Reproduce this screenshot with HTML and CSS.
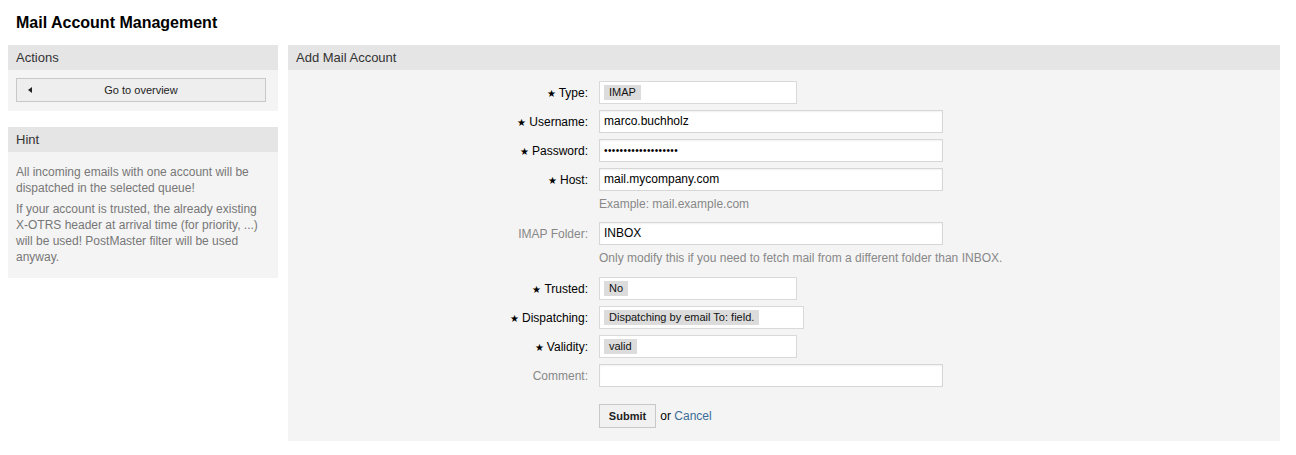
FILE: index.html
```html
<!DOCTYPE html>
<html>
<head>
<meta charset="utf-8">
<link rel="stylesheet" href="styles.css">
</head>
<body>
<h1 class="title">Mail Account Management</h1>
<div class="layout">
  <aside class="sidebar">
    <section class="box">
      <h2 class="box-head">Actions</h2>
      <div class="box-body actions">
        <button class="btn-overview"><span class="tri"></span>Go to overview</button>
      </div>
    </section>
    <section class="box hint">
      <h2 class="box-head">Hint</h2>
      <div class="box-body hint-body">
        <p>All incoming emails with one account will be dispatched in the selected queue!</p>
        <p>If your account is trusted, the already existing X-OTRS header at arrival time (for priority, ...) will be used! PostMaster filter will be used anyway.</p>
      </div>
    </section>
  </aside>
  <main class="main box">
    <h2 class="box-head">Add Mail Account</h2>
    <div class="box-body form">
      <div class="row">
        <label class="lbl req"><span class="star">★</span> Type:</label>
        <div class="select w198"><span class="opt">IMAP</span></div>
      </div>
      <div class="row">
        <label class="lbl req"><span class="star">★</span> Username:</label>
        <div class="input">marco.buchholz</div>
      </div>
      <div class="row">
        <label class="lbl req"><span class="star">★</span> Password:</label>
        <div class="input pw">•••••••••••••••••••</div>
      </div>
      <div class="row">
        <label class="lbl req"><span class="star">★</span> Host:</label>
        <div class="input">mail.mycompany.com</div>
      </div>
      <div class="help">Example: mail.example.com</div>
      <div class="row">
        <label class="lbl opt-lbl">IMAP Folder:</label>
        <div class="input">INBOX</div>
      </div>
      <div class="help help2">Only modify this if you need to fetch mail from a different folder than INBOX.</div>
      <div class="row">
        <label class="lbl req"><span class="star">★</span> Trusted:</label>
        <div class="select w198"><span class="opt">No</span></div>
      </div>
      <div class="row">
        <label class="lbl req"><span class="star">★</span> Dispatching:</label>
        <div class="select w205"><span class="opt">Dispatching by email To: field.</span></div>
      </div>
      <div class="row">
        <label class="lbl req"><span class="star">★</span> Validity:</label>
        <div class="select w198"><span class="opt">valid</span></div>
      </div>
      <div class="row">
        <label class="lbl opt-lbl">Comment:</label>
        <div class="input"></div>
      </div>
      <div class="row submit-row">
        <span class="lbl"></span>
        <div class="submit-wrap"><button class="btn-submit">Submit</button> or <a class="cancel" href="#">Cancel</a></div>
      </div>
    </div>
  </main>
</div>
</body>
</html>
```

FILE: styles.css
```css
* { box-sizing: border-box; }
body {
  margin: 0;
  font-family: "Liberation Sans", Arial, Helvetica, sans-serif;
  font-size: 12px;
  color: #000;
  background: #fff;
}
.title {
  margin: 0;
  padding: 13px 16px 0 16px;
  font-size: 16px;
  font-weight: bold;
  line-height: 20px;
  height: 45px;
  color: #000;
}
.layout {
  display: flex;
  gap: 10px;
  padding: 0 16px 0 8px;
  align-items: flex-start;
}
.sidebar {
  width: 270px;
  flex: none;
  display: flex;
  flex-direction: column;
  gap: 16px;
}
.box { background: #f4f4f4; }
.box-head {
  margin: 0;
  height: 25px;
  line-height: 25px;
  background: #e5e5e5;
  font-size: 13px;
  font-weight: normal;
  color: #333;
  padding: 0 8px;
}
.actions { padding: 8px 12px 9px 8px; }
.btn-overview {
  position: relative;
  display: block;
  width: 250px;
  height: 24px;
  background: #eeeeee;
  border: 1px solid #c8c8c8;
  font-family: inherit;
  font-size: 11px;
  color: #222;
  padding: 0;
  text-align: center;
}
.tri {
  position: absolute;
  left: 11px;
  top: 8px;
  width: 0;
  height: 0;
  border-top: 3px solid transparent;
  border-bottom: 3px solid transparent;
  border-right: 4px solid #222;
}
.hint-body {
  padding: 12px 8px 13px 8px;
  color: #777;
  font-size: 12px;
  line-height: 16px;
}
.hint-body p { margin: 0 0 5px 0; }
.hint-body p:last-child { margin-bottom: 0; }
.main {
  flex: 1;
  min-height: 395px;
}
.form {
  padding: 11px 0 13px 0;
  display: flex;
  flex-direction: column;
}
.row {
  display: flex;
  align-items: center;
  margin-bottom: 6px;
}
.lbl {
  width: 311px;
  flex: none;
  text-align: right;
  padding-right: 11px;
  font-size: 12px;
  color: #000;
}
.star { font-size: 10px; }
.opt-lbl { color: #888; }
.input {
  width: 344px;
  height: 23px;
  line-height: 21px;
  background: #fff;
  border: 1px solid #d6d6d6;
  box-shadow: inset 0 1px 2px rgba(0,0,0,0.06);
  padding: 0 4px;
  font-size: 12px;
  color: #000;
}
.pw { font-size: 10px; letter-spacing: 0.4px; }
.select {
  height: 23px;
  background: #fff;
  border: 1px solid #d9d9d9;
  padding: 3px 4px;
  display: flex;
  align-items: flex-start;
}
.w198 { width: 198px; }
.w205 { width: 205px; }
.opt {
  background: #dcdcdc;
  font-size: 11px;
  line-height: 15px;
  padding: 0 5px;
  color: #111;
}
.help {
  margin: 0 0 11px 311px;
  color: #888;
  font-size: 12px;
  line-height: 14px;
}
.help2 { margin-top: 0; margin-bottom: 12px; }
.submit-row { margin-top: 11px; margin-bottom: 0; }
.submit-wrap { font-size: 12px; color: #000; }
.btn-submit {
  height: 24px;
  width: 57px;
  background: #f1f1f1;
  border: 1px solid #c8c8c8;
  font-family: inherit;
  font-size: 11px;
  font-weight: bold;
  color: #222;
  padding: 0;
  margin-right: 1px;
}
.cancel { color: #3a6d98; text-decoration: none; }
```
